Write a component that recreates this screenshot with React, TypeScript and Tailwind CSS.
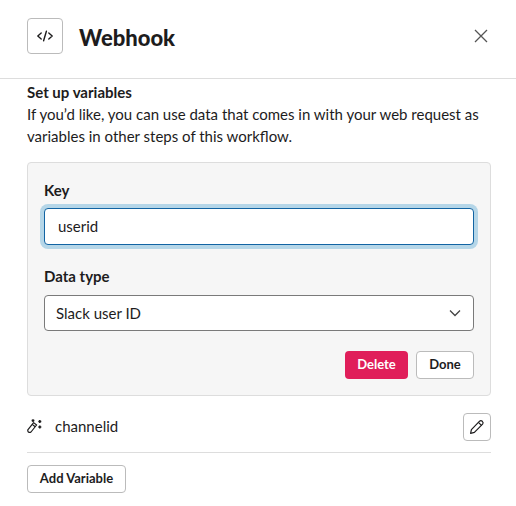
import * as React from 'react'

function CodeIcon() {
  return (
    <svg width="20" height="20" viewBox="0 0 20 20" fill="none" stroke="#1d1c1d" strokeWidth="1.4" strokeLinecap="round" strokeLinejoin="round">
      <path d="M6.2 7 L2.8 10 L6.2 13" />
      <path d="M13.8 7 L17.2 10 L13.8 13" />
      <path d="M11.4 5.2 L8.6 14.8" />
    </svg>
  )
}

function WandIcon() {
  return (
    <svg width="16" height="16" viewBox="0 0 16 16" fill="none" stroke="#1d1c1d" strokeWidth="1.2" strokeLinejoin="round">
      <path d="M1 10.6 L6.6 3.6 L9.6 6 L4 13 Q2.7 13.9 1.4 13 Q0.4 11.8 1 10.6 Z" />
      <path d="M5.2 5.4 L8.2 7.8" />
      <path d="M6 0.2 V3 M4.6 1.6 H7.4 M12.8 1 V4 M11.3 2.5 H14.3 M12.8 6.6 V9.6 M11.3 8.1 H14.3" strokeWidth="1.5" />
    </svg>
  )
}

function PencilIcon() {
  return (
    <svg width="16" height="16" viewBox="0 0 16 16" fill="none" stroke="#1d1c1d" strokeWidth="1.2" strokeLinejoin="round">
      <path d="M1.6 14.4 L2.4 10.6 L10.6 2.2 Q11.9 1 13.3 2.3 Q14.8 3.8 13.6 5.2 L5.4 13.4 Z" />
      <path d="M9.4 3.4 L12.5 6.4" />
    </svg>
  )
}

export default function App() {
  return (
    <div className="w-[516px] h-[506px] overflow-hidden bg-white text-[#1d1c1d] font-['Lato','Open_Sans',sans-serif]">
      <header className="h-[79px] flex items-center justify-between border-b border-[#dddddd] pl-[27px] pr-[27px] pb-[6px]">
        <div className="flex items-center gap-[16px]">
          <div className="w-9 h-9 rounded border border-[#bbbbbb] flex items-center justify-center">
            <CodeIcon />
          </div>
          <h1 className="text-[22px] font-black leading-none pt-[4px]">Webhook</h1>
        </div>
        <svg width="16" height="16" viewBox="0 0 16 16" fill="none" stroke="#555555" strokeWidth="1.3">
          <path d="M2 2 L14 14 M14 2 L2 14" />
        </svg>
      </header>

      <main className="pr-[25px] pl-[27px] pt-[2px]">
        <h2 className="text-[15px] font-bold leading-[22px]">Set up variables</h2>
        <p className="text-[15px] leading-[22px]">
          If you’d like, you can use data that comes in with your web request as variables in other steps of this workflow.
        </p>

        <section className="mt-[15px] w-[464px] h-[234px] rounded border border-[#dddddd] bg-[#f6f6f6] px-4 pt-[17px]">
          <label className="block text-[15px] font-bold leading-[20px]">Key</label>
          <div className="mt-[8px] h-[37px] flex items-center rounded border border-[#1264a3] bg-white pl-[13px] text-[15px] ring-4 ring-[#b5d6e8]">
            userid
          </div>
          <label className="block mt-[21px] text-[15px] font-bold leading-[20px]">Data type</label>
          <div className="mt-[9px] h-9 flex items-center justify-between rounded border border-[#7a7a7a] bg-white pl-[11px] pr-[11px] text-[15px]">
            <span>Slack user ID</span>
            <svg width="14" height="14" viewBox="0 0 14 14" fill="none" stroke="#444444" strokeWidth="1.3">
              <path d="M2 4.5 L7 9.5 L12 4.5" />
            </svg>
          </div>
          <div className="mt-5 flex justify-end gap-2">
            <button className="h-7 w-[63px] rounded bg-[#e01e5a] text-white text-[13px] font-bold">Delete</button>
            <button className="h-7 w-[58px] rounded border border-[#bbbbbb] bg-white text-[13px] font-bold">Done</button>
          </div>
        </section>

        <div className="w-[464px] h-[57px] flex items-center justify-between border-b border-[#dddddd] pt-[5px]">
          <div className="flex items-center gap-[12px]">
            <WandIcon />
            <span className="text-[15px]">channelid</span>
          </div>
          <button className="w-7 h-7 rounded border border-[#bbbbbb] flex items-center justify-center">
            <PencilIcon />
          </button>
        </div>

        <button className="mt-3 h-7 w-[99px] rounded border border-[#bbbbbb] bg-white text-[13px] font-bold">Add Variable</button>
      </main>
    </div>
  )
}
